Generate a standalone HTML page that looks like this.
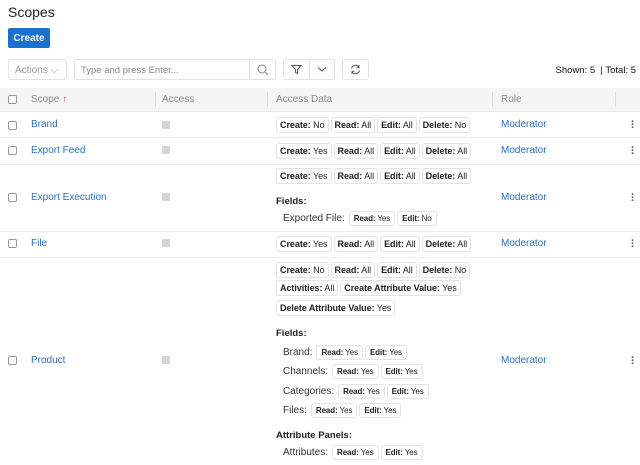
<!DOCTYPE html>
<html><head><style>
*{box-sizing:border-box;margin:0;padding:0}
body{width:640px;height:465px;overflow:hidden;background:#fff;font-family:"Liberation Sans",sans-serif;color:#333;position:relative;font-size:10px}
.a{position:absolute}
.btn{background:#1a6fd1;color:#fff;font-weight:bold;font-size:10px;border-radius:2px;display:flex;align-items:center;justify-content:center}
.box{border:1px solid #e2e2e2;border-radius:3px;background:#fff}
.cb{width:9px;height:9px;border:1px solid #999;border-radius:2px;background:#fff}
.acb{width:8px;height:8px;border-radius:1px;background:#d4d4d4}
.lnk{color:#2c6fc4;font-size:10px}
.b{display:inline-block;border:1px solid #e3e3e3;border-radius:3px;height:16px;line-height:14px;padding:0 3px;font-size:9px;letter-spacing:-0.05px;color:#222;margin-right:2px;white-space:nowrap}
.b b{font-weight:bold}
.s{height:15px;line-height:13px;font-size:8px;letter-spacing:-0.1px;padding:0 4px}
.line{height:18px;display:flex;align-items:center;white-space:nowrap}
.lab{font-size:10px;color:#333;margin-right:4px}
.h{font-weight:bold;font-size:9.5px;color:#222}
.sep{position:absolute;left:0;width:640px;height:1px;background:#ececec}
.dots{position:absolute;left:631px;width:2px;font-size:11px;color:#555;font-weight:bold;line-height:3px}
</style></head><body>
<div class="a" style="left:8px;top:4px;font-size:14px;color:#222">Scopes</div>
<div class="a btn" style="left:8px;top:28px;width:42px;height:20px">Create</div>

<div class="a box" style="left:8px;top:59px;width:59px;height:21px;color:#999;font-size:10px;padding:5px 6px">Actions ⌵</div>
<div class="a box" style="left:74px;top:59px;width:202px;height:21px"></div>
<div class="a" style="left:249px;top:59px;width:1px;height:21px;background:#e2e2e2"></div>
<div class="a" style="left:81px;top:65px;color:#888;font-size:9.5px">Type and press Enter...</div>
<svg class="a" style="left:257px;top:64px" width="12" height="12" viewBox="0 0 12 12"><circle cx="5" cy="5" r="4" fill="none" stroke="#888" stroke-width="1"/><line x1="8" y1="8" x2="11" y2="11" stroke="#888"/></svg>
<div class="a box" style="left:283px;top:59px;width:52px;height:21px"></div>
<div class="a" style="left:309px;top:59px;width:1px;height:21px;background:#e2e2e2"></div>
<svg class="a" style="left:291px;top:64px" width="11" height="11" viewBox="0 0 11 11"><path d="M1 1.5H10L6.5 5.5V9.5L4.5 8.5V5.5Z" fill="none" stroke="#555"/></svg>
<svg class="a" style="left:317px;top:66px" width="10" height="7" viewBox="0 0 10 7"><path d="M1 1.5L5 5L9 1.5" fill="none" stroke="#555"/></svg>
<div class="a box" style="left:342px;top:59px;width:27px;height:21px"></div>
<svg class="a" style="left:349px;top:63px" width="13" height="13" viewBox="0 0 13 13"><path d="M2.5 5.5A4 4 0 0 1 10 4.5M10.5 7.5A4 4 0 0 1 3 8.5" fill="none" stroke="#555"/><path d="M10 2V4.8H7.5M3 11V8.2H5.5" fill="none" stroke="#555"/></svg>
<div class="a" style="right:4px;top:65px;font-size:9.5px;color:#111">Shown: 5 &nbsp;| Total: 5</div>

<div class="a" style="left:0;top:88px;width:640px;height:23px;background:#f5f5f5"></div>
<div class="a cb" style="left:8px;top:95px"></div>
<div class="a" style="left:31px;top:94px;color:#888;font-size:10px">Scope <span style="color:#c55">↑</span></div>
<div class="a" style="left:155px;top:92px;width:1px;height:15px;background:#ddd"></div>
<div class="a" style="left:162px;top:94px;color:#888;font-size:10px">Access</div>
<div class="a" style="left:267px;top:92px;width:1px;height:15px;background:#ddd"></div>
<div class="a" style="left:276px;top:94px;color:#888;font-size:10px">Access Data</div>
<div class="a" style="left:492px;top:92px;width:1px;height:15px;background:#ddd"></div>
<div class="a" style="left:501px;top:94px;color:#888;font-size:10px">Role</div>
<div class="a" style="left:615px;top:92px;width:1px;height:15px;background:#ddd"></div>

<div class="sep" style="top:111px"></div>
<div class="sep" style="top:137px"></div>
<div class="sep" style="top:164px"></div>
<div class="sep" style="top:231px"></div>
<div class="sep" style="top:257px"></div>

<div class="a cb" style="left:8px;top:121px"></div><div class="a lnk" style="left:31px;top:119px">Brand</div><div class="a acb" style="left:162px;top:121px"></div><div class="a lnk" style="left:501px;top:119px">Moderator</div><div class="dots" style="top:121px">·<br>·<br>·</div>
<div class="a line" style="left:276px;top:116px"><span class="b"><b>Create:</b> No</span><span class="b"><b>Read:</b> All</span><span class="b"><b>Edit:</b> All</span><span class="b"><b>Delete:</b> No</span></div>

<div class="a cb" style="left:8px;top:146px"></div><div class="a lnk" style="left:31px;top:145px">Export Feed</div><div class="a acb" style="left:162px;top:146px"></div><div class="a lnk" style="left:501px;top:145px">Moderator</div><div class="dots" style="top:147px">·<br>·<br>·</div>
<div class="a line" style="left:276px;top:142px"><span class="b"><b>Create:</b> Yes</span><span class="b"><b>Read:</b> All</span><span class="b"><b>Edit:</b> All</span><span class="b"><b>Delete:</b> All</span></div>

<div class="a cb" style="left:8px;top:193px"></div><div class="a lnk" style="left:31px;top:192px">Export Execution</div><div class="a acb" style="left:162px;top:193px"></div><div class="a lnk" style="left:501px;top:192px">Moderator</div><div class="dots" style="top:194px">·<br>·<br>·</div>
<div class="a line" style="left:276px;top:167px"><span class="b"><b>Create:</b> Yes</span><span class="b"><b>Read:</b> All</span><span class="b"><b>Edit:</b> All</span><span class="b"><b>Delete:</b> All</span></div>
<div class="a h" style="left:276px;top:196px">Fields:</div>
<div class="a line" style="left:283px;top:209px"><span class="lab">Exported File:</span><span class="b s"><b>Read:</b> Yes</span><span class="b s"><b>Edit:</b> No</span></div>

<div class="a cb" style="left:8px;top:239px"></div><div class="a lnk" style="left:31px;top:238px">File</div><div class="a acb" style="left:162px;top:239px"></div><div class="a lnk" style="left:501px;top:238px">Moderator</div><div class="dots" style="top:240px">·<br>·<br>·</div>
<div class="a line" style="left:276px;top:235px"><span class="b"><b>Create:</b> Yes</span><span class="b"><b>Read:</b> All</span><span class="b"><b>Edit:</b> All</span><span class="b"><b>Delete:</b> All</span></div>

<div class="a cb" style="left:8px;top:356px"></div><div class="a lnk" style="left:31px;top:355px">Product</div><div class="a acb" style="left:162px;top:356px"></div><div class="a lnk" style="left:501px;top:355px">Moderator</div><div class="dots" style="top:357px">·<br>·<br>·</div>
<div class="a line" style="left:276px;top:261px"><span class="b"><b>Create:</b> No</span><span class="b"><b>Read:</b> All</span><span class="b"><b>Edit:</b> All</span><span class="b"><b>Delete:</b> No</span></div>
<div class="a line" style="left:276px;top:279px"><span class="b"><b>Activities:</b> All</span><span class="b"><b>Create Attribute Value:</b> Yes</span></div>
<div class="a line" style="left:276px;top:299px"><span class="b"><b>Delete Attribute Value:</b> Yes</span></div>
<div class="a h" style="left:276px;top:328px">Fields:</div>
<div class="a line" style="left:283px;top:343px"><span class="lab">Brand:</span><span class="b s"><b>Read:</b> Yes</span><span class="b s"><b>Edit:</b> Yes</span></div>
<div class="a line" style="left:283px;top:362px"><span class="lab">Channels:</span><span class="b s"><b>Read:</b> Yes</span><span class="b s"><b>Edit:</b> Yes</span></div>
<div class="a line" style="left:283px;top:382px"><span class="lab">Categories:</span><span class="b s"><b>Read:</b> Yes</span><span class="b s"><b>Edit:</b> Yes</span></div>
<div class="a line" style="left:283px;top:401px"><span class="lab">Files:</span><span class="b s"><b>Read:</b> Yes</span><span class="b s"><b>Edit:</b> Yes</span></div>
<div class="a h" style="left:276px;top:430px">Attribute Panels:</div>
<div class="a line" style="left:283px;top:443px"><span class="lab">Attributes:</span><span class="b s"><b>Read:</b> Yes</span><span class="b s"><b>Edit:</b> Yes</span></div>
</body></html>
